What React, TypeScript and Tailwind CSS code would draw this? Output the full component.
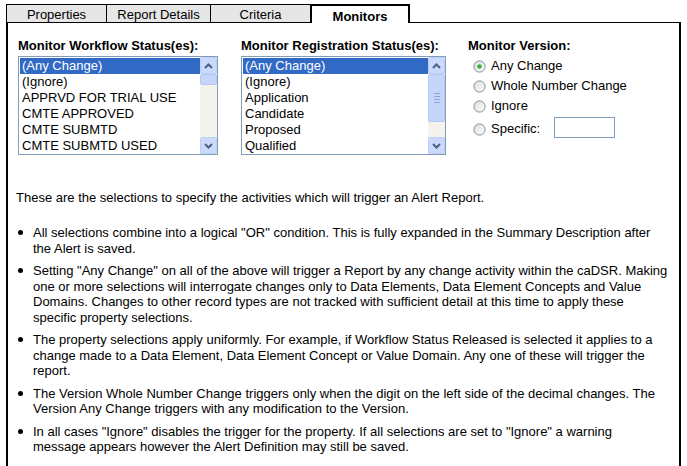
import React from "react";

function Arrow({ dir }: { dir: "up" | "down" }) {
  return (
    <div className="w-[17px] h-[17px] shrink-0 rounded-[2px] border border-[#bcd0f5] bg-[#cbdafc] flex items-center justify-center">
      <svg width="9" height="6" viewBox="0 0 9 6">
        {dir === "up" ? (
          <path d="M1 5 L4.5 1.5 L8 5" fill="none" stroke="#4d6185" strokeWidth="2" />
        ) : (
          <path d="M1 1 L4.5 4.5 L8 1" fill="none" stroke="#4d6185" strokeWidth="2" />
        )}
      </svg>
    </div>
  );
}

function ListBox({
  items,
  big,
  widthClass,
}: {
  items: string[];
  big: boolean;
  widthClass: string;
}) {
  return (
    <div className={`${widthClass} h-[99px] border border-[#7f9db9] bg-white flex mt-[2px]`}>
      <div className="flex-1 pt-[1px] pl-[1px] overflow-hidden">
        {items.map((it, i) => (
          <div
            key={it}
            className={
              i === 0
                ? "h-[16px] leading-[16px] pl-[2px] bg-[#316ac5] text-white whitespace-nowrap"
                : "h-[16px] leading-[16px] pl-[2px] whitespace-nowrap"
            }
          >
            {it}
          </div>
        ))}
      </div>
      <div className="w-[17px] h-full bg-[#f4f3ee] flex flex-col">
        <Arrow dir="up" />
        <div className="flex-1 relative">
          {big ? (
            <div className="absolute left-0 right-0 top-0 h-[48px] rounded-[2px] border border-[#b4c8f4] bg-[#c6d6fb] flex flex-col items-center justify-center gap-[2px]">
              <div className="w-[6px] h-[1px] bg-[#8ea6dd]" />
              <div className="w-[6px] h-[1px] bg-[#8ea6dd]" />
              <div className="w-[6px] h-[1px] bg-[#8ea6dd]" />
              <div className="w-[6px] h-[1px] bg-[#8ea6dd]" />
            </div>
          ) : (
            <div className="absolute left-0 right-0 top-0 h-[11px] rounded-[2px] border border-[#b4c8f4] bg-[#c6d6fb]" />
          )}
        </div>
        <Arrow dir="down" />
      </div>
    </div>
  );
}

function Radio({ checked }: { checked?: boolean }) {
  return (
    <svg width="13" height="13" viewBox="0 0 13 13" className="shrink-0">
      <defs>
        <linearGradient id="rg" x1="0" y1="0" x2="1" y2="1">
          <stop offset="0" stopColor="#dcdcd6" />
          <stop offset="1" stopColor="#ffffff" />
        </linearGradient>
      </defs>
      <circle cx="6.5" cy="6.5" r="5.6" fill="url(#rg)" stroke="#7d8f9c" strokeWidth="1" />
      {checked && <circle cx="6.5" cy="6.5" r="2.3" fill="#3dad3d" />}
    </svg>
  );
}

const workflow = [
  "(Any Change)",
  "(Ignore)",
  "APPRVD FOR TRIAL USE",
  "CMTE APPROVED",
  "CMTE SUBMTD",
  "CMTE SUBMTD USED",
];
const registration = [
  "(Any Change)",
  "(Ignore)",
  "Application",
  "Candidate",
  "Proposed",
  "Qualified",
];

const bullets: React.ReactNode[] = [
  'All selections combine into a logical "OR" condition. This is fully expanded in the Summary Description after the Alert is saved.',
  'Setting "Any Change" on all of the above will trigger a Report by any change activity within the caDSR. Making one or more selections will interrogate changes only to Data Elements, Data Element Concepts and Value Domains. Changes to other record types are not tracked with sufficient detail at this time to apply these specific property selections.',
  "The property selections apply uniformly. For example, if Workflow Status Released is selected it applies to a change made to a Data Element, Data Element Concept or Value Domain. Any one of these will trigger the report.",
  "The Version Whole Number Change triggers only when the digit on the left side of the decimal changes. The Version Any Change triggers with any modification to the Version.",
  <>
    In all cases "Ignore" disables the trigger for the property. If all selections are set to "Ignore" a warning
    <br />
    message appears however the Alert Definition may still be saved.
  </>,
];

export default function App() {
  return (
    <div className="w-[687px] h-[466px] bg-white overflow-hidden font-['Liberation_Sans',Arial,sans-serif] text-[13px] text-black">
      <div className="pl-[6px] pt-[4px] w-[681px]">
        <div className="flex h-[18px] relative z-10">
          <div className="w-[100px] h-[18px] border-t border-l border-black bg-[#e6e6e6] flex items-center justify-center leading-none pt-[2px]">
            Properties
          </div>
          <div className="w-[104px] h-[18px] border-t border-l border-black bg-[#e6e6e6] flex items-center justify-center leading-none pt-[2px]">
            Report Details
          </div>
          <div className="w-[100px] h-[18px] border-t border-l border-black bg-[#e6e6e6] flex items-center justify-center leading-none pt-[2px]">
            Criteria
          </div>
          <div className="w-[100px] h-[19px] border-2 border-b-0 border-black bg-white flex items-center justify-center font-bold leading-none pt-[3px]">
            Monitors
          </div>
        </div>
        <div className="h-[460px] border-t border-l-2 border-r-2 border-black">
          <div className="flex pl-[10px] pt-[15px]">
            <div className="w-[200px] flex flex-col">
              <div className="font-bold leading-[16px] whitespace-nowrap">Monitor Workflow Status(es):</div>
              <ListBox items={workflow} big={false} widthClass="w-[200px]" />
            </div>
            <div className="w-[205px] ml-[23px] flex flex-col">
              <div className="font-bold leading-[16px] whitespace-nowrap">Monitor Registration Status(es):</div>
              <ListBox items={registration} big={true} widthClass="w-[205px]" />
            </div>
            <div className="ml-[22px] flex flex-col">
              <div className="font-bold leading-[16px] whitespace-nowrap">Monitor Version:</div>
              <div className="h-[20px] mt-[2px] flex items-center pl-[5px] gap-[5px]">
                <Radio checked />
                <span>Any Change</span>
              </div>
              <div className="h-[20px] flex items-center pl-[5px] gap-[5px]">
                <Radio />
                <span>Whole Number Change</span>
              </div>
              <div className="h-[20px] flex items-center pl-[5px] gap-[5px]">
                <Radio />
                <span>Ignore</span>
              </div>
              <div className="h-[26px] flex items-center pl-[5px] gap-[5px]">
                <Radio />
                <span>Specific:</span>
                <div className="ml-[9px] -mt-[3px] w-[61px] h-[21px] border border-[#7f9db9] bg-white" />
              </div>
            </div>
          </div>
          <div className="pl-[8px] pr-[9px] mt-[35px] leading-[16px]">
            These are the selections to specify the activities which will trigger an Alert Report.
          </div>
          <div className="pl-[8px] pr-[9px] mt-[19px] flex flex-col gap-[7px] leading-[15.5px]">
            {bullets.map((b, i) => (
              <div key={i} className="flex">
                <div className="w-[17px] shrink-0 pt-[5px] pl-[2px]">
                  <div className="w-[5px] h-[5px] rounded-full bg-black" />
                </div>
                <div>{b}</div>
              </div>
            ))}
          </div>
        </div>
      </div>
    </div>
  );
}
